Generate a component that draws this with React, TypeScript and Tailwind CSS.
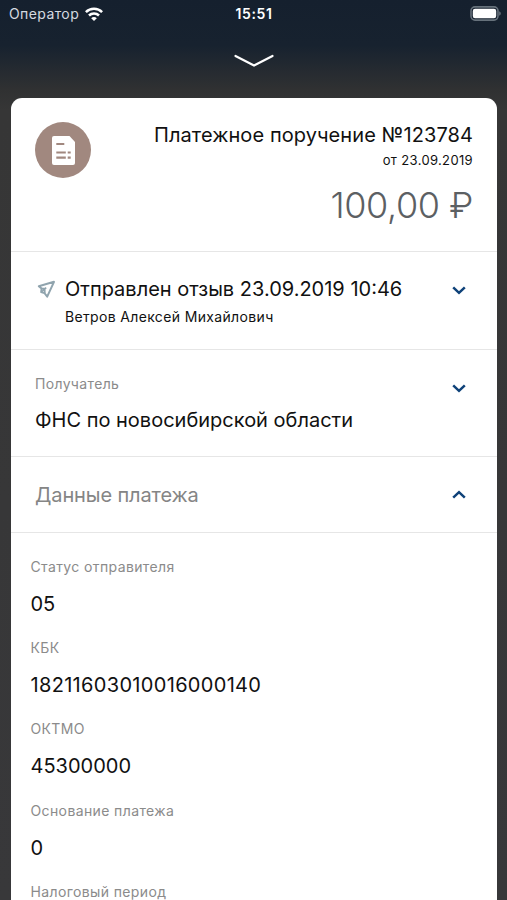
import type { ReactNode } from "react";
import clsx from "clsx";

type PaymentField = {
  label: string;
  value?: string;
  valueClass?: string;
};

const paymentFields: PaymentField[] = [
  { label: "Статус отправителя", value: "05" },
  { label: "КБК", value: "18211603010016000140", valueClass: "tracking-[0.32px]" },
  { label: "ОКТМО", value: "45300000" },
  { label: "Основание платежа", value: "0" },
  { label: "Налоговый период" },
];

function WifiIcon() {
  return (
    <svg width="18" height="14" viewBox="0 0 18 14" fill="none" stroke="white" strokeWidth="2.5">
      <path d="M0.9 5.1a11.5 11.5 0 0 1 16.2 0" />
      <path d="M4 8.5a7.1 7.1 0 0 1 10 0" />
      <path d="M9 14 6.2 11.2a3.9 3.9 0 0 1 5.6 0z" fill="white" stroke="none" />
    </svg>
  );
}

function BatteryIcon() {
  return (
    <svg width="31" height="15" viewBox="0 0 31 15">
      <rect x="1" y="0.9" width="27" height="13.2" rx="4" fill="none" stroke="#66717b" strokeWidth="1.6" />
      <rect x="2.8" y="2.7" width="23.4" height="9.6" rx="2.2" fill="white" />
      <path d="M29.3 5.3c1.8 0.8 1.8 3.6 0 4.4z" fill="#7b858d" />
    </svg>
  );
}

function DocumentIcon() {
  return (
    <svg width="23" height="29" viewBox="0 0 23 29">
      <path d="M2 0h15.5L23 6V27a2 2 0 0 1-2 2H2a2 2 0 0 1-2-2V2a2 2 0 0 1 2-2z" fill="white" />
      <path d="M4.3 8h8M4.3 16.5h9.5M15.7 16.5h3M4.3 21.7h9.5M15.7 21.7h3" stroke="#a1887f" strokeWidth="2.2" />
    </svg>
  );
}

function SendIcon() {
  return (
    <svg width="19" height="19" viewBox="0 0 19 19" fill="none" stroke="#90a4ae" strokeWidth="2">
      <path d="M17 1.8 1.8 6.2 4.6 8.6 4.2 12 7.4 13 10.2 16.6z" strokeLinejoin="round" />
      <path d="M4.4 12 9.2 7.6M4.6 8.6h3.2v4.4" strokeWidth="1.6" />
    </svg>
  );
}

function Chevron({ up }: { up?: boolean }) {
  return (
    <svg
      className={clsx("shrink-0", up && "rotate-180")}
      width="14" height="9" viewBox="0 0 14 9" fill="none" stroke="#0f4279" strokeWidth="2.5"
    >
      <path d="M1.2 1.3 7 6.8l5.8-5.5" />
    </svg>
  );
}

function Section({ className, children }: { className?: string; children: ReactNode }) {
  return <section className={clsx("border-b border-[#e6e6e6]", className)}>{children}</section>;
}

export default function App() {
  return (
    <div className="h-[900px] w-[507px] overflow-hidden bg-[linear-gradient(180deg,#15202e_0px,#17222f_45px,#303132_90px,#363636_110px,#38383a_900px)] font-['Inter','Liberation_Sans',sans-serif] whitespace-nowrap">
      <header className="grid h-[27px] grid-cols-3 items-center pr-[6px] pl-[9px] text-white">
        <div className="flex items-center gap-[6px]">
          <span className="text-[14px] tracking-[0.4px] text-[#d5dae0]">Оператор</span>
          <WifiIcon />
        </div>
        <span className="pr-[2px] text-center text-[14px] font-semibold tracking-[0.6px]">15:51</span>
        <div className="flex justify-end"><BatteryIcon /></div>
      </header>

      <div className="flex h-[71px] justify-center pt-[27px]">
        <svg width="40" height="14" viewBox="0 0 40 14" fill="none" stroke="white" strokeWidth="2.2" strokeLinecap="round">
          <path d="M1.5 2 20 11.5 38.5 2" />
        </svg>
      </div>

      <main className="mr-[10px] ml-[11px] h-[802px] overflow-hidden rounded-t-[11px] bg-white text-[#111]">
        <Section className="flex h-[154px] justify-between px-6 pt-6">
          <div className="flex size-14 items-center justify-center rounded-full bg-[#a1887f]">
            <DocumentIcon />
          </div>
          <div className="flex flex-col items-end">
            <h1 className="text-[20px] leading-[27px] tracking-[0.08px]">Платежное поручение №123784</h1>
            <p className="mt-px text-[13px] leading-[20px] tracking-[0.35px]">от 23.09.2019</p>
            <p className="mt-[13px] text-[36px] leading-[44px] font-light tracking-[-0.4px] text-[#5c6063]">100,00 ₽</p>
          </div>
        </Section>

        <Section className="flex h-[98px] justify-between pt-[22px] pr-[31px] pl-[26px]">
          <div className="flex gap-[9px]">
            <div className="pt-[6px]"><SendIcon /></div>
            <div>
              <h2 className="text-[20px] leading-[30px]">Отправлен отзыв 23.09.2019 10:46</h2>
              <p className="text-[14px] leading-[25px] tracking-[0.35px]">Ветров Алексей Михайлович</p>
            </div>
          </div>
          <div className="pt-[12px]"><Chevron /></div>
        </Section>

        <Section className="flex h-[107px] justify-between pt-[23px] pr-[31px] pl-6">
          <div>
            <p className="text-[14px] leading-[22px] tracking-[0.35px] text-[#8b8b8b]">Получатель</p>
            <p className="mt-[9px] text-[20px] leading-[32px]">ФНС по новосибирской области</p>
          </div>
          <div className="pt-[11px]"><Chevron /></div>
        </Section>

        <Section className="flex h-[76px] items-center justify-between pr-[31px] pl-6">
          <h2 className="text-[20px] tracking-[-0.12px] text-[#858585]">Данные платежа</h2>
          <Chevron up />
        </Section>

        <dl className="pt-[23.5px] pl-[19.5px]">
          {paymentFields.map(({ label, value, valueClass }) => (
            <div key={label} className="h-[81.4px]">
              <dt className="text-[14px] leading-[20px] tracking-[0.38px] text-[#8b8b8b]">{label}</dt>
              {value && <dd className={clsx("mt-[12px] text-[20px] leading-[30px]", valueClass)}>{value}</dd>}
            </div>
          ))}
        </dl>
      </main>
    </div>
  );
}
